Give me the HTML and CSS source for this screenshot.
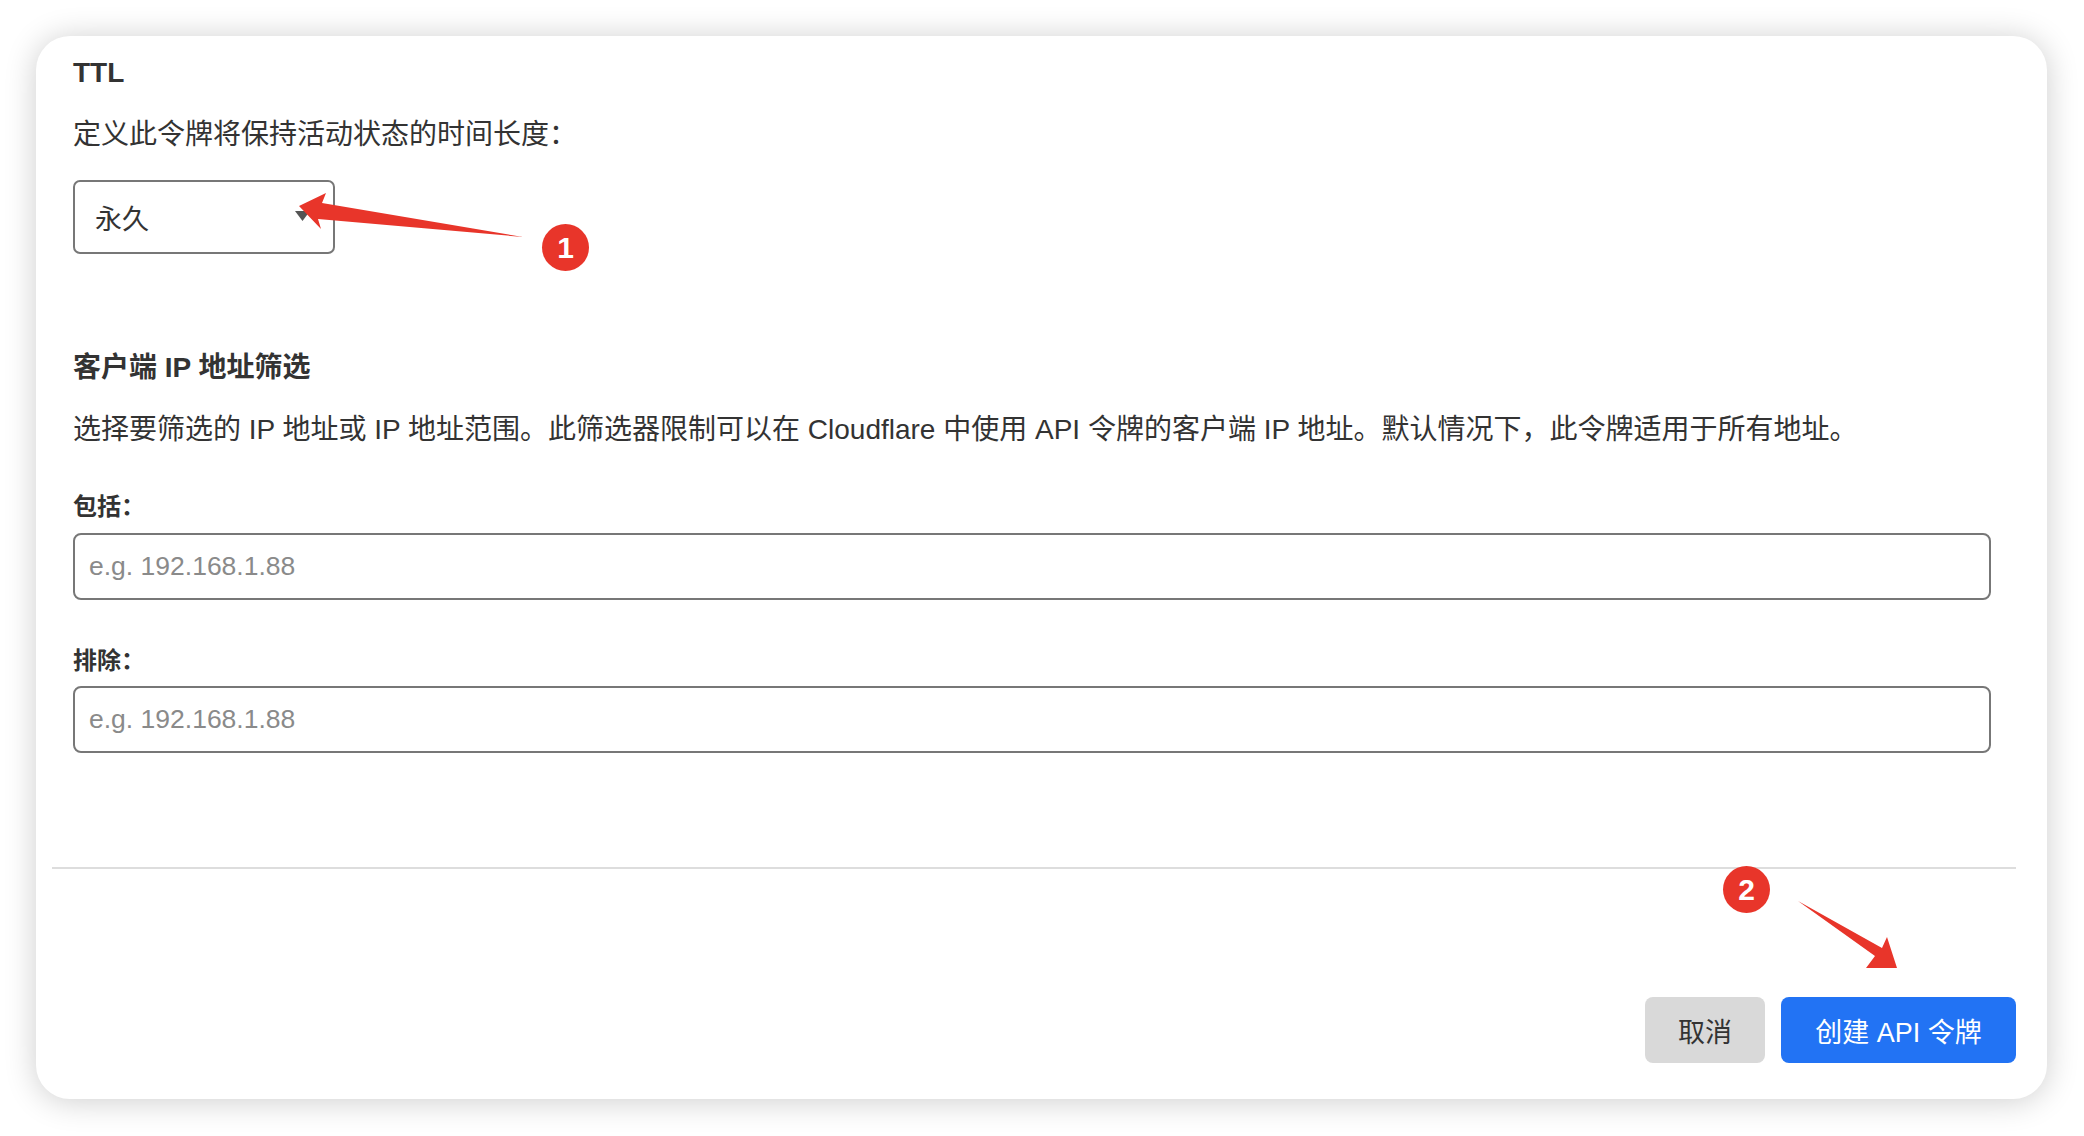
FILE: index.html
```html
<!DOCTYPE html>
<html lang="zh-CN">
<head>
    <meta charset="UTF-8">
    <meta name="viewport" content="width=device-width, initial-scale=1.0">
    <title>创建 API 令牌</title>
    <link rel="stylesheet" href="styles.css">
</head>
<body>
    <div class="card">
        <div class="card-body">
            <h3 class="section-title">TTL</h3>
            <p class="hint">定义此令牌将保持活动状态的时间长度：</p>
            <div class="select">
                <span>永久</span>
                <svg class="caret" width="15" height="10" viewBox="0 0 15 10"><path d="M0 0H15L7.5 10Z"/></svg>
            </div>

            <h3 class="section-title section-gap">客户端 IP 地址筛选</h3>
            <p class="hint">选择要筛选的 IP 地址或 IP 地址范围。此筛选器限制可以在 Cloudflare 中使用 API 令牌的客户端 IP 地址。默认情况下，此令牌适用于所有地址。</p>

            <label class="field-label" for="include">包括：</label>
            <input class="ip-input" id="include" type="text" placeholder="e.g. 192.168.1.88">

            <label class="field-label" for="exclude">排除：</label>
            <input class="ip-input" id="exclude" type="text" placeholder="e.g. 192.168.1.88">
        </div>

        <div class="card-footer">
            <button type="button" class="btn btn-cancel">取消</button>
            <button type="button" class="btn btn-primary">创建 API 令牌</button>
        </div>
    </div>

    <!-- annotation arrows -->
    <svg class="annotations" width="2084" height="1136" viewBox="0 0 2084 1136">
        <path d="M299 206 L326 193 L322 203 L523 237 L318 219 L321 229 Z"/>
        <path d="M1897 968 L1866 968 L1875 956 L1798 901 L1882 948 L1887 937 Z"/>
    </svg>
    <span class="badge badge-one">1</span>
    <span class="badge badge-two">2</span>
</body>
</html>
```

FILE: styles.css
```css
body {
    margin: 0;
    background: #fff;
    font-family: "Liberation Sans", "Noto Sans CJK SC", sans-serif;
    color: #333;
    width: 2084px;
    height: 1136px;
    position: relative;
    overflow: hidden;
}
.card {
    margin: 36px 0 0 36px;
    width: 2011px;
    height: 1063px;
    box-sizing: border-box;
    padding: 19px 31px 36px 16px;
    background: #fff;
    border-radius: 34px;
    box-shadow: 0 2px 32px rgba(0, 0, 0, 0.2);
    display: flex;
    flex-direction: column;
}
.card-body {
    padding: 0 25px 0 21px;
    display: flex;
    flex-direction: column;
    align-items: flex-start;
}
.section-title {
    margin: 0;
    font-size: 28px;
    line-height: 36px;
    font-weight: bold;
}
.section-gap {
    margin-top: 96px;
}
.hint {
    margin: 26px 0 0;
    font-size: 28px;
    line-height: 36px;
}
.select {
    margin-top: 27px;
    width: 262px;
    height: 74px;
    box-sizing: border-box;
    border: 2px solid #777;
    border-radius: 7px;
    padding: 0 23px 0 20px;
    display: flex;
    align-items: center;
    justify-content: space-between;
    font-size: 27px;
}
.caret {
    fill: #555;
    margin-top: -2px;
}
.field-label {
    margin-top: 43px;
    font-size: 24px;
    line-height: 32px;
    font-weight: bold;
}
.ip-input {
    margin-top: 10px;
    width: 100%;
    height: 67px;
    box-sizing: border-box;
    border: 2px solid #777;
    border-radius: 8px;
    padding: 0 14px;
    font-family: "Liberation Sans", sans-serif;
    font-size: 26.5px;
    color: #333;
    outline: none;
}
.ip-input + .field-label {
    margin-top: 45px;
}
#exclude {
    margin-top: 9px;
}
.ip-input::placeholder {
    color: #8a8a8a;
}
.card-footer {
    margin-top: auto;
    border-top: 2px solid #ddd;
    padding-top: 128px;
    display: flex;
    justify-content: flex-end;
    gap: 16px;
}
.btn {
    height: 66px;
    border: none;
    border-radius: 8px;
    font-family: "Liberation Sans", "Noto Sans CJK SC", sans-serif;
    font-size: 27px;
    cursor: pointer;
}
.btn-cancel {
    width: 120px;
    background: #d9d9d9;
    color: #333;
}
.btn-primary {
    width: 235px;
    background: #2273f4;
    color: #fff;
}
/* annotations drawn over the screenshot */
.annotations {
    position: absolute;
    left: 0;
    top: 0;
    fill: #e8352a;
    pointer-events: none;
}
.badge {
    position: absolute;
    width: 47px;
    height: 47px;
    border-radius: 50%;
    background: #e8352a;
    color: #fff;
    font-size: 30px;
    font-weight: bold;
    line-height: 47px;
    text-align: center;
}
.badge-one {
    left: 542px;
    top: 224px;
}
.badge-two {
    left: 1723px;
    top: 866px;
}
```
